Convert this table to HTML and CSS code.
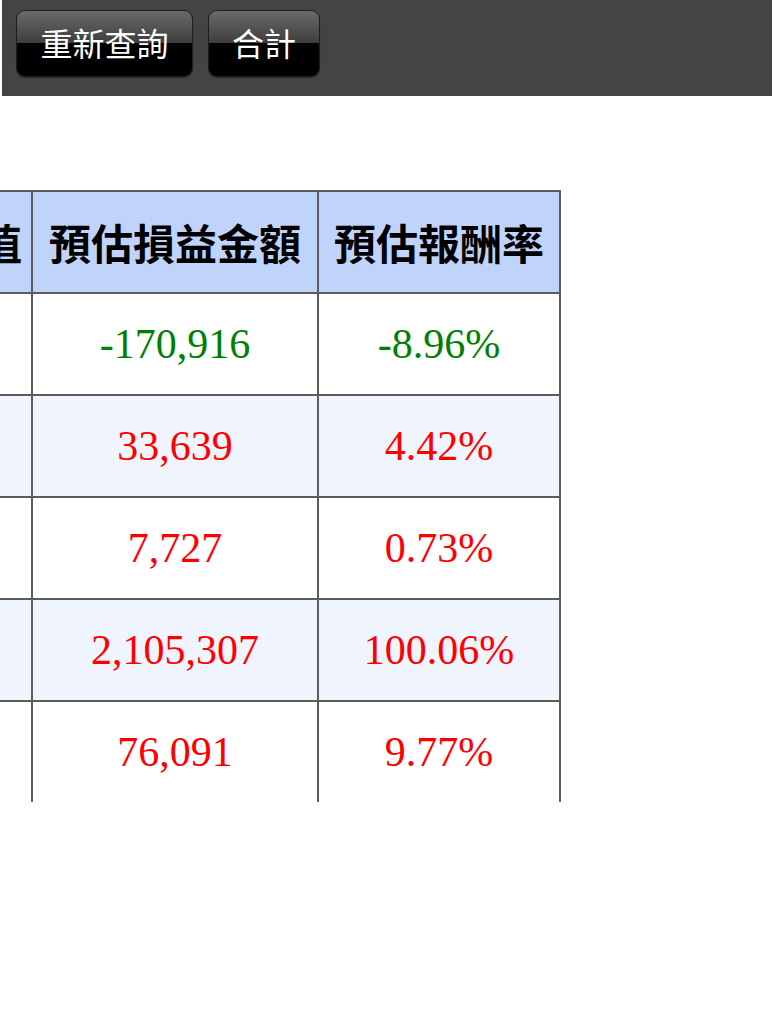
FILE: index.html
```html
<!DOCTYPE html>
<html lang="zh-Hant">
<head>
<meta charset="utf-8">
<title>預估損益</title>
<link rel="stylesheet" href="styles.css">
</head>
<body>
<div class="toolbar">
  <button class="btn btn-wide">重新查詢</button>
  <button class="btn btn-narrow">合計</button>
</div>
<div class="viewport">
  <table class="grid">
    <colgroup>
      <col class="c1"><col class="c2"><col class="c3">
    </colgroup>
    <thead>
      <tr><th>參考市值</th><th>預估損益金額</th><th>預估報酬率</th></tr>
    </thead>
    <tbody>
      <tr><td></td><td class="down">-170,916</td><td class="down">-8.96%</td></tr>
      <tr class="alt"><td></td><td class="up">33,639</td><td class="up">4.42%</td></tr>
      <tr><td></td><td class="up">7,727</td><td class="up">0.73%</td></tr>
      <tr class="alt"><td></td><td class="up">2,105,307</td><td class="up">100.06%</td></tr>
      <tr><td></td><td class="up">76,091</td><td class="up">9.77%</td></tr>
    </tbody>
  </table>
</div>
</body>
</html>
```
FILE: styles.css
```css
html, body {
  margin: 0;
  padding: 0;
  background: #ffffff;
}
body {
  width: 774px;
  overflow: hidden;
}
.toolbar {
  margin-left: 2px;
  width: 770px;
  height: 96px;
  background: #444444;
  display: flex;
  align-items: flex-start;
  gap: 15px;
  padding: 10px 0 0 14px;
  box-sizing: border-box;
}
.btn {
  height: 67px;
  border: 1px solid #1e1e1e;
  border-radius: 9px;
  background: linear-gradient(to bottom, #6a6a6a 0%, #3e3e3e 49%, #000000 50%, #000000 100%);
  color: #ffffff;
  font-family: "Noto Sans CJK TC", "Noto Sans CJK SC", sans-serif;
  font-size: 32px;
  font-weight: 400;
  line-height: 1;
  padding: 0 0 3px 0;
  box-shadow: 0 1px 1px rgba(0,0,0,0.4);
}
.btn-wide { width: 177px; }
.btn-narrow { width: 112px; }
.viewport {
  margin-top: 94px;
  height: 612px;
  width: 774px;
  overflow: hidden;
}
.grid {
  margin-left: -157px;
  border-collapse: collapse;
  table-layout: fixed;
  width: 716px;
}
.c1 { width: 188px; }
.c2 { width: 286px; }
.c3 { width: 242px; }
.grid th, .grid td {
  border: 2px solid #5c5c5c;
  height: 102px;
  padding: 0;
  text-align: center;
  vertical-align: middle;
  box-sizing: border-box;
}
.grid th {
  background: #c0d4fb;
  color: #000000;
  font-family: "Noto Sans CJK TC", "Noto Sans CJK SC", sans-serif;
  font-weight: 700;
  font-size: 42px;
  line-height: 1;
  white-space: nowrap;
}
.grid td {
  font-family: "Liberation Serif", "Times New Roman", serif;
  font-size: 42px;
  line-height: 1;
  background: #ffffff;
}
.grid tr.alt td {
  background: #f0f5fd;
}
.down { color: #008000; }
.up { color: #ff0000; }
```
